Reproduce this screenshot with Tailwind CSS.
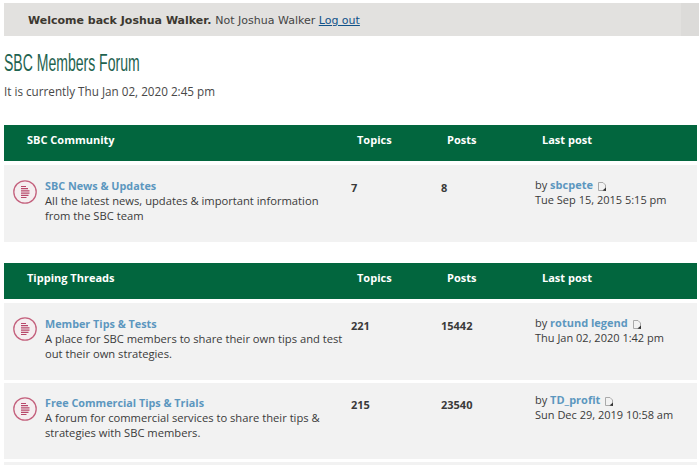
<!DOCTYPE html>
<html><head><meta charset="utf-8"><script src="https://cdn.jsdelivr.net/npm/@tailwindcss/browser@4"></script></head>
<body class="bg-white overflow-hidden h-[465px] font-['Open_Sans',sans-serif] text-[#3a3a3a] text-[11px]">
<svg class="hidden"><defs>
<symbol id="fi" viewBox="0 0 24 24"><circle cx="12" cy="12" r="11.200" fill="#f5eef0" stroke="#c4627e" stroke-width="1.300"/><path d="M8 6.500h5M8 8.700h7M8 10.900h8.500M8 13.100h8.500M8 15.300h7.500M8 17.500h5.500" stroke="#b8486a" stroke-width="1.200" fill="none"/></symbol>
<symbol id="pi" viewBox="0 0 10 11"><path d="M1.500 1.500h4.500l2.500 2.500v5.500h-7z" fill="none" stroke="#aaa" stroke-width="1"/><path d="M5.500 9.500l3.500-3v3.500z" fill="#333"/></symbol>
</defs></svg>
<div class="pl-[4px] pr-[2px] pt-[3px]">
<div class="-mr-[2px] h-[33px] bg-[linear-gradient(to_right,#e2e1df_677px,#dcdbd9_677px)] flex items-center pl-[24px] pt-[3px] font-['DejaVu_Sans',sans-serif] text-[11px] text-[#444]"><b class="text-[#3c3830] mr-[4px]">Welcome back Joshua Walker.</b> Not Joshua Walker&nbsp;<a class="text-[#105289] underline">Log out</a></div>
<h1 class="mt-[14px] h-[26px] leading-[26px] text-[#1f6350] text-[23px] font-['Liberation_Sans',sans-serif] font-normal inline-block origin-left scale-x-[0.61] whitespace-nowrap">SBC Members Forum</h1>
<p class="mt-[7px] text-[11.700px] leading-[16px] text-[#484848] h-[16px]">It is currently Thu Jan 02, 2020 2:45 pm</p>

<section class="mt-[26px]">
<div class="h-[36px] pb-[6px] bg-[#02663e] text-white font-bold grid grid-cols-[343px_90px_95px_1fr] items-center text-[11px]"><span class="pl-[23px]">SBC Community</span><span class="pl-[10px]">Topics</span><span class="pl-[10px]">Posts</span><span class="pl-[10px]">Last post</span></div>
<div class="mt-[4px] h-[77px] bg-[#f2f2f2] grid grid-cols-[343px_90px_95px_1fr]">
<div class="flex"><svg class="w-[24px] h-[24px] ml-[9px] mt-[15px] shrink-0"><use href="#fi"/></svg><div class="ml-[8px] mt-[13px] leading-[15px] w-[298px]"><a class="font-bold text-[10.800px] text-[#5c97bf]">SBC News &amp; Updates</a><p class="text-[11.200px]">All the latest news, updates &amp; important information from the SBC team</p></div></div>
<b class="pl-[4px] mt-[15px]">7</b><b class="mt-[15px] pl-[4px]">8</b>
<div class="mt-[12px] leading-[15px] pl-[3px]">by <a class="font-bold text-[#5c97bf]">sbcpete</a> <svg class="inline w-[10px] h-[11px] ml-[1px]"><use href="#pi"/></svg><br>Tue Sep 15, 2015 5:15 pm</div>
</div>
</section>

<section class="mt-[21px]">
<div class="h-[36px] pb-[6px] bg-[#02663e] text-white font-bold grid grid-cols-[343px_90px_95px_1fr] items-center text-[11px]"><span class="pl-[23px]">Tipping Threads</span><span class="pl-[10px]">Topics</span><span class="pl-[10px]">Posts</span><span class="pl-[10px]">Last post</span></div>
<div class="mt-[4px] h-[77px] bg-[#f2f2f2] grid grid-cols-[343px_90px_95px_1fr]">
<div class="flex"><svg class="w-[24px] h-[24px] ml-[9px] mt-[14px] shrink-0"><use href="#fi"/></svg><div class="ml-[8px] mt-[13px] leading-[15px] w-[298px]"><a class="font-bold text-[10.800px] text-[#5c97bf]">Member Tips &amp; Tests</a><p class="text-[11.200px]">A place for SBC members to share their own tips and test out their own strategies.</p></div></div>
<b class="pl-[4px] mt-[15px]">221</b><b class="mt-[15px] pl-[4px]">15442</b>
<div class="mt-[12px] leading-[15px] pl-[3px]">by <a class="font-bold text-[#5c97bf]">rotund legend</a> <svg class="inline w-[10px] h-[11px] ml-[1px]"><use href="#pi"/></svg><br>Thu Jan 02, 2020 1:42 pm</div>
</div>
<div class="mt-[3px] h-[76px] bg-[#f2f2f2] grid grid-cols-[343px_90px_95px_1fr]">
<div class="flex"><svg class="w-[24px] h-[24px] ml-[9px] mt-[14px] shrink-0"><use href="#fi"/></svg><div class="ml-[8px] mt-[12px] leading-[15px] w-[298px]"><a class="font-bold text-[10.800px] text-[#5c97bf]">Free Commercial Tips &amp; Trials</a><p class="text-[11.200px]">A forum for commercial services to share their tips &amp; strategies with SBC members.</p></div></div>
<b class="pl-[4px] mt-[14px]">215</b><b class="mt-[14px] pl-[4px]">23540</b>
<div class="mt-[9px] leading-[15px] pl-[3px]">by <a class="font-bold text-[#5c97bf]">TD_profit</a> <svg class="inline w-[10px] h-[11px] ml-[1px]"><use href="#pi"/></svg><br>Sun Dec 29, 2019 10:58 am</div>
</div>
<div class="mt-[3px] h-[3px] bg-[#f2f2f2]"></div>
</section>
</div>
</body></html>
